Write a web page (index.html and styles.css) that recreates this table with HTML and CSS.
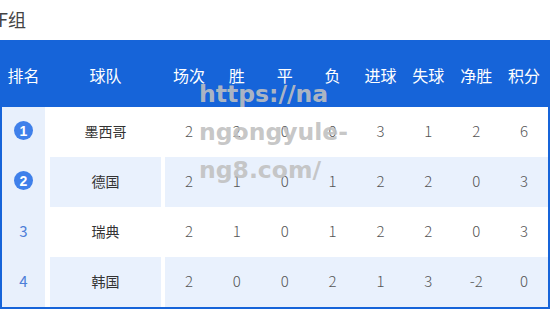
FILE: index.html
```html
<!DOCTYPE html>
<html lang="zh">
<head>
<meta charset="utf-8">
<link rel="stylesheet" href="styles.css">
</head>
<body>
<div class="page">
  <div class="title">F组</div>
  <div class="table">
    <div class="head">
      <div class="cell rank">排名</div>
      <div class="cell team">球队</div>
      <div class="cell">场次</div>
      <div class="cell">胜</div>
      <div class="cell">平</div>
      <div class="cell">负</div>
      <div class="cell">进球</div>
      <div class="cell">失球</div>
      <div class="cell">净胜</div>
      <div class="cell">积分</div>
    </div>
    <div class="row">
      <div class="cell rank"><span class="badge">1</span></div>
      <div class="cell team">墨西哥</div>
      <div class="cell num">2</div><div class="cell num">2</div><div class="cell num">0</div><div class="cell num">0</div>
      <div class="cell num">3</div><div class="cell num">1</div><div class="cell num">2</div><div class="cell num">6</div>
    </div>
    <div class="row alt">
      <div class="cell rank"><span class="badge">2</span></div>
      <div class="cell team">德国</div>
      <div class="cell num">2</div><div class="cell num">1</div><div class="cell num">0</div><div class="cell num">1</div>
      <div class="cell num">2</div><div class="cell num">2</div><div class="cell num">0</div><div class="cell num">3</div>
    </div>
    <div class="row">
      <div class="cell rank"><span class="plain">3</span></div>
      <div class="cell team">瑞典</div>
      <div class="cell num">2</div><div class="cell num">1</div><div class="cell num">0</div><div class="cell num">1</div>
      <div class="cell num">2</div><div class="cell num">2</div><div class="cell num">0</div><div class="cell num">3</div>
    </div>
    <div class="row alt">
      <div class="cell rank"><span class="plain">4</span></div>
      <div class="cell team">韩国</div>
      <div class="cell num">2</div><div class="cell num">0</div><div class="cell num">0</div><div class="cell num">2</div>
      <div class="cell num">1</div><div class="cell num">3</div><div class="cell num">-2</div><div class="cell num">0</div>
    </div>
  </div>
  <div class="watermark">https://na<br>ngongyule-<br>ng8.com/</div>
</div>
</body>
</html>
```
FILE: styles.css
```css
html, body {
  margin: 0;
  padding: 0;
  background: #ffffff;
  width: 550px;
  height: 310px;
  overflow: hidden;
  font-family: "Noto Sans CJK SC", "Noto Sans", sans-serif;
}

.page {
  position: relative;
  width: 550px;
  height: 310px;
}

.title {
  height: 40px;
  line-height: 38px;
  font-size: 18px;
  color: #444444;
  margin-left: -2px;
}

.table {
  border: 2px solid #1664d9;
  width: 546px;
}

.head,
.row {
  display: grid;
  grid-template-columns: 48px 115px repeat(8, 1fr);
}

.head {
  height: 65px;
  background: #1664d9;
  color: #ffffff;
  font-size: 16px;
}

.head .cell {
  padding-top: 3px;
}

.row {
  height: 50px;
  font-size: 14px;
}

.cell {
  display: flex;
  align-items: center;
  justify-content: center;
  padding-bottom: 3px;
  box-sizing: border-box;
  white-space: nowrap;
}

.rank {
  margin-right: 5px;
}

.row .rank {
  background: #e8f0fc;
}

.team {
  margin-right: 4px;
}

.row .team {
  color: #333333;
}

.row.alt .cell {
  background: #e9f1fd;
}

.row.alt .rank {
  background: #e8f0fc;
}

.num {
  color: #555555;
  font-size: 15px;
  font-weight: 300;
}

.badge {
  width: 19px;
  height: 19px;
  border-radius: 50%;
  background: #3f80ea;
  color: #ffffff;
  font-family: "Liberation Sans", Arial, sans-serif;
  font-size: 14px;
  font-weight: bold;
  display: flex;
  align-items: center;
  justify-content: center;
  line-height: 1;
}

.plain {
  color: #4d7fd8;
  font-size: 15px;
}

.watermark {
  position: absolute;
  left: 199px;
  top: 75px;
  font-family: "DejaVu Sans", sans-serif;
  font-weight: bold;
  font-size: 23.5px;
  line-height: 38px;
  color: rgba(192, 192, 192, 0.9);
  pointer-events: none;
}
```
